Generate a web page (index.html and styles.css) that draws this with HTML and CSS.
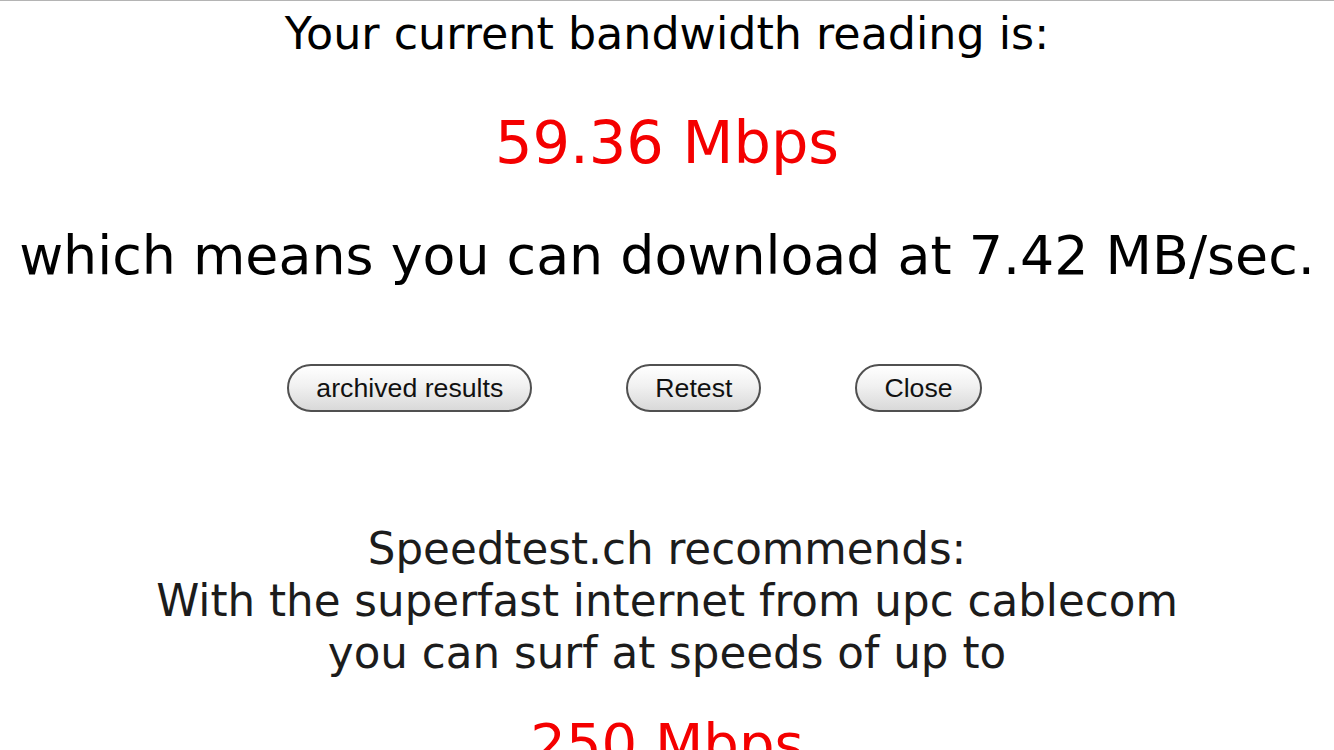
FILE: index.html
```
<!DOCTYPE html>
<html lang="en">

<head>
    <meta charset="UTF-8">
    <meta name="viewport" content="width=device-width, initial-scale=1.0">
    <title>Speedtest result</title>
    <link rel="stylesheet" href="styles.css">
</head>

<body>
    <div class="page">
        <p class="reading-label">Your current bandwidth reading is:</p>
        <p class="reading-value">59.36 Mbps</p>
        <p class="reading-meaning">which means you can download at 7.42 MB/sec.</p>

        <div class="actions">
            <button class="pill">archived results</button>
            <button class="pill">Retest</button>
            <button class="pill">Close</button>
        </div>

        <div class="promo">
            <p class="promo-text">Speedtest.ch recommends:<br>
                With the superfast internet from upc cablecom<br>
                you can surf at speeds of up to</p>
            <p class="promo-speed">250 Mbps</p>
        </div>
    </div>
</body>

</html>
```
FILE: styles.css
```
:root {
    --text: #000;
    --red: #f40000;
}

body {
    margin: 0;
    background: #fff;
    color: var(--text);
    font-family: 'DejaVu Sans', Verdana, sans-serif;
    overflow: hidden;
}

.page {
    border-top: 1px solid #b4b4b4;
    height: 749px;
    text-align: center;
}

p {
    margin: 0;
}

.reading-label {
    font-size: 44.4px;
    line-height: 60px;
    margin-top: 3px;
}

.reading-value {
    font-size: 59px;
    line-height: 80px;
    margin-top: 39px;
    color: var(--red);
}

.reading-meaning {
    font-size: 53.8px;
    line-height: 70px;
    margin-top: 38px;
    white-space: nowrap;
}

.actions {
    display: flex;
    justify-content: center;
    gap: 94px;
    margin-top: 73px;
    padding-right: 65px;
}

.pill {
    height: 48px;
    padding: 0 27px;
    border: 2px solid #505050;
    border-radius: 24px;
    background: linear-gradient(#ffffff, #f1f1f1 45%, #d9d9d9);
    font-family: 'Liberation Sans', Arial, sans-serif;
    font-size: 26.7px;
    line-height: 44px;
    color: #111;
    cursor: pointer;
}

.promo {
    margin-top: 111px;
    color: #1c1c1c;
}

.promo-text {
    font-size: 43.6px;
    line-height: 52px;
}

.promo-speed {
    font-size: 56px;
    line-height: 70px;
    margin-top: 30px;
    color: var(--red);
}
```
